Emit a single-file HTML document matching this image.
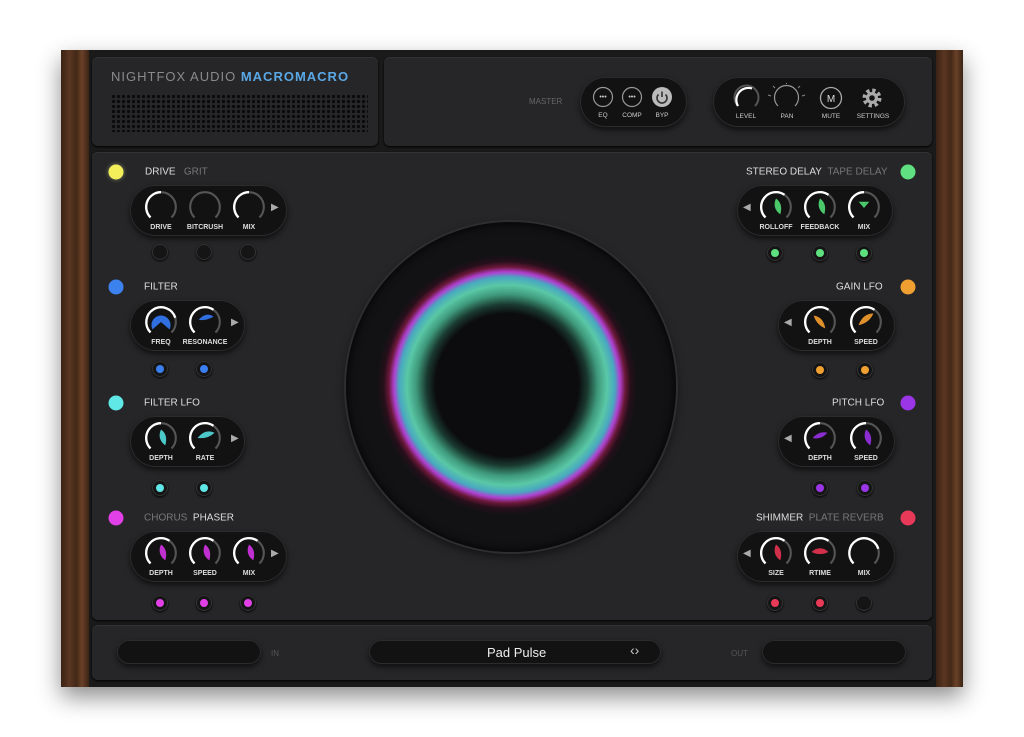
<!DOCTYPE html>
<html><head><meta charset="utf-8"><style>
*{margin:0;padding:0;box-sizing:border-box}
body{width:1024px;height:737px;background:#fff;position:relative;overflow:hidden;font-family:"Liberation Sans",sans-serif}
.a{position:absolute}
.wood{background:linear-gradient(90deg,#3a2214,#5a3622 30%,#432817 55%,#6a4128 75%,#3b2315)}
.panel{position:absolute;background:#262628;border-radius:6px;box-shadow:inset 0 1px 0 #333,0 1px 2px #000}
.pill{position:absolute;background:#121213;border-radius:26px;box-shadow:0 3px 6px rgba(0,0,0,.6),inset 0 0 0 1px #2c2c2e}
.k{position:absolute;width:36px;height:36px}
.lb{position:absolute;font-size:7px;font-weight:bold;color:#ddd;transform:translateX(-50%);white-space:nowrap}
.led{position:absolute;width:16px;height:16px;border-radius:50%;background:#151516;box-shadow:0 1px 2px #000,inset 0 0 0 1px #333;transform:translate(-50%,-50%)}
.led i{position:absolute;left:4px;top:4px;width:8px;height:8px;border-radius:50%}
.dot{position:absolute;width:15px;height:15px;border-radius:50%;transform:translate(-50%,-50%)}
.t{position:absolute;font-size:10px;color:#ddd;transform:translateY(-50%);white-space:nowrap}
.t span{color:#777}
.tri{position:absolute;font-size:10px;color:#aaa}
</style></head><body>
<div class="a" style="left:61px;top:50px;width:902px;height:637px;background:#1a1a1b;box-shadow:0 10px 22px rgba(0,0,0,.45)"></div>
<div class="a wood" style="left:61px;top:50px;width:28px;height:637px"></div>
<div class="a wood" style="left:936px;top:50px;width:27px;height:637px"></div>

<div class="panel" style="left:92px;top:57px;width:286px;height:89px"></div>
<div class="a" style="left:111px;top:69px;font-size:13px;letter-spacing:1px;color:#8a8a8c">NIGHTFOX AUDIO <b style="color:#5aa8e6">MACROMACRO</b></div>
<div class="a" style="left:111px;top:94px;width:257px;height:38px;background-image:radial-gradient(circle,#0a0a0b 1.5px,transparent 1.8px);background-size:5px 5px"></div>

<div class="panel" style="left:384px;top:57px;width:548px;height:89px"></div>
<div class="a" style="left:529px;top:97px;font-size:8px;color:#666">MASTER</div>
<div class="pill" style="left:580px;top:77px;width:107px;height:50px"></div>
<svg class="a" style="left:592px;top:86px" width="90" height="36">
<circle cx="11" cy="11" r="9.5" fill="none" stroke="#999" stroke-width="1.2"/><text x="11" y="13" font-size="7" fill="#ccc" text-anchor="middle">•••</text>
<circle cx="40" cy="11" r="9.5" fill="none" stroke="#999" stroke-width="1.2"/><text x="40" y="13" font-size="7" fill="#ccc" text-anchor="middle">•••</text>
<circle cx="70" cy="11" r="10" fill="#bbb"/><path d="M66.5 8.5A5 5 0 1 0 73.5 8.5" fill="none" stroke="#333" stroke-width="1.6"/><line x1="70" y1="5.5" x2="70" y2="11" stroke="#333" stroke-width="1.6"/>
<text x="11" y="31" font-size="6.5" fill="#ccc" text-anchor="middle">EQ</text><text x="40" y="31" font-size="6.5" fill="#ccc" text-anchor="middle">COMP</text><text x="70" y="31" font-size="6.5" fill="#ccc" text-anchor="middle">BYP</text></svg>
<div class="pill" style="left:713px;top:77px;width:192px;height:50px"></div>
<svg class="a" style="left:725px;top:83px" width="175" height="40">
<path d="M13 23A12 12 0 1 1 30 23" fill="none" stroke="#555" stroke-width="2"/><path d="M13 23A12 12 0 0 1 27 5.5" fill="none" stroke="#fff" stroke-width="2.2"/>
<path d="M53 23A12 12 0 1 1 70 23" fill="none" stroke="#999" stroke-width="1.2"/>
<g stroke="#888" stroke-width="1"><line x1="46" y1="13" x2="43" y2="12"/><line x1="50" y1="5" x2="48" y2="3"/><line x1="61.5" y1="1" x2="61.5" y2="-1"/><line x1="73" y1="5" x2="75" y2="3"/><line x1="77" y1="13" x2="80" y2="12"/></g>
<circle cx="106" cy="15" r="10.5" fill="none" stroke="#aaa" stroke-width="1.3"/><text x="106" y="19" font-size="10" fill="#ddd" text-anchor="middle">M</text>
<circle cx="147" cy="15" r="7" fill="none" stroke="#aaa" stroke-width="5" stroke-dasharray="3 2.5"/><circle cx="147" cy="15" r="6" fill="#aaa"/><circle cx="147" cy="15" r="2.8" fill="#121213"/>
<g font-size="6.5" fill="#ccc" text-anchor="middle"><text x="21" y="35">LEVEL</text><text x="62" y="35">PAN</text><text x="106" y="35">MUTE</text><text x="148" y="35">SETTINGS</text></g></svg>

<div class="panel" style="left:92px;top:152px;width:840px;height:468px"></div>
<div class="panel" style="left:92px;top:625px;width:840px;height:55px"></div>
<div class="pill" style="left:117px;top:640px;width:144px;height:24px;border-radius:12px;background:#121213"></div>
<div class="a" style="left:271px;top:649px;font-size:8px;color:#555">IN</div>
<div class="pill" style="left:369px;top:640px;width:292px;height:24px;border-radius:12px"></div>
<div class="a" style="left:487px;top:645px;font-size:13px;color:#eee">Pad Pulse</div>
<div class="a" style="left:630px;top:642px;font-size:14px;color:#ccc">&lsaquo;&rsaquo;</div>
<div class="a" style="left:731px;top:649px;font-size:8px;color:#555">OUT</div>
<div class="pill" style="left:762px;top:640px;width:144px;height:24px;border-radius:12px"></div>

<div class="a" style="left:346px;top:222px;width:330px;height:330px;border-radius:50%;background:#121214;box-shadow:0 0 0 2px #2e2e30,0 4px 10px rgba(0,0,0,.6),inset 0 0 10px #000"></div>
<div class="a" style="left:377px;top:255px;width:260px;height:260px;border-radius:50%;background:radial-gradient(circle closest-side,#0c0c0e 0,#0c0c0e 55%,#1a3a30 62%,#3f9a7c 70%,#5ac8a6 77%,#48a8c0 83%,#b040d0 87%,#6a1838 91%,rgba(60,12,32,.5) 95%,rgba(18,18,20,0) 100%)"></div>

<div class="dot" style="left:116px;top:172px;background:#f2ef5a;box-shadow:0 0 4px #886"></div>
<div class="t" style="left:145px;top:172px">DRIVE &nbsp; <span>GRIT</span></div>
<div class="dot" style="left:116px;top:287px;background:#3b82ee"></div>
<div class="t" style="left:144px;top:287px">FILTER</div>
<div class="dot" style="left:116px;top:403px;background:#5fe8e6"></div>
<div class="t" style="left:144px;top:403px">FILTER LFO</div>
<div class="dot" style="left:116px;top:518px;background:#e040e6"></div>
<div class="t" style="left:144px;top:518px"><span>CHORUS</span> &nbsp;PHASER</div>
<div class="dot" style="left:908px;top:172px;background:#60e080"></div>
<div class="t" style="left:746px;top:172px">STEREO DELAY &nbsp;<span>TAPE DELAY</span></div>
<div class="dot" style="left:908px;top:287px;background:#f0a030"></div>
<div class="t" style="left:836px;top:287px">GAIN LFO</div>
<div class="dot" style="left:908px;top:403px;background:#9a36e6"></div>
<div class="t" style="left:832px;top:403px">PITCH LFO</div>
<div class="dot" style="left:908px;top:518px;background:#e83a58"></div>
<div class="t" style="left:756px;top:518px">SHIMMER &nbsp;<span>PLATE REVERB</span></div>

<div class="pill" style="left:130px;top:185px;width:157px;height:51px"></div>
<div class="pill" style="left:130px;top:300px;width:115px;height:51px"></div>
<div class="pill" style="left:130px;top:416px;width:115px;height:51px"></div>
<div class="pill" style="left:130px;top:531px;width:157px;height:51px"></div>
<div class="pill" style="left:737px;top:185px;width:156px;height:51px"></div>
<div class="pill" style="left:778px;top:300px;width:117px;height:51px"></div>
<div class="pill" style="left:778px;top:416px;width:117px;height:51px"></div>
<div class="pill" style="left:737px;top:531px;width:158px;height:51px"></div>
<div class="tri" style="left:271px;top:202px">&#9654;</div>
<div class="tri" style="left:231px;top:317px">&#9654;</div>
<div class="tri" style="left:231px;top:433px">&#9654;</div>
<div class="tri" style="left:271px;top:548px">&#9654;</div>
<div class="tri" style="left:743px;top:202px">&#9664;</div>
<div class="tri" style="left:784px;top:317px">&#9664;</div>
<div class="tri" style="left:784px;top:433px">&#9664;</div>
<div class="tri" style="left:743px;top:548px">&#9664;</div>

<svg width="0" height="0" style="position:absolute"><defs>
<path id="g" d="M7.1 26.9A14 14 0 1 1 26.9 26.9" fill="none" stroke="#555" stroke-width="2"/>
<path id="w5" d="M7.1 26.9A14 14 0 0 1 17 3" fill="none" stroke="#fff" stroke-width="2.2"/>
<path id="w6" d="M7.1 26.9A14 14 0 0 1 25 5.5" fill="none" stroke="#fff" stroke-width="2.2"/>
<path id="w8" d="M7.1 26.9A14 14 0 1 1 30.5 13" fill="none" stroke="#fff" stroke-width="2.2"/>
<path id="lf" d="M17 9Q24 14 21 24Q13 18 17 9Z"/>
</defs></svg>

<svg class="k" style="left:143px;top:189px" viewBox="0 0 34 34"><use href="#g"/><use href="#w5"/></svg>
<svg class="k" style="left:187px;top:189px" viewBox="0 0 34 34"><use href="#g"/></svg>
<svg class="k" style="left:231px;top:189px" viewBox="0 0 34 34"><use href="#g"/><use href="#w5"/></svg>
<svg class="k" style="left:143px;top:304px" viewBox="0 0 34 34"><use href="#g"/><use href="#w8"/><path d="M9 24A9 9 0 1 1 25 24L17 17Z" fill="#2f6fe0"/></svg>
<svg class="k" style="left:187px;top:304px" viewBox="0 0 34 34"><use href="#g"/><use href="#w6"/><path d="M11 15Q18 7 25 12Q18 16 11 15Z" fill="#2f6fe0"/></svg>
<svg class="k" style="left:143px;top:420px" viewBox="0 0 34 34"><use href="#g"/><use href="#w5"/><use href="#lf" fill="#4cc8c8"/></svg>
<svg class="k" style="left:187px;top:420px" viewBox="0 0 34 34"><use href="#g"/><use href="#w6"/><path d="M10 17Q17 8 26 12Q20 18 10 17Z" fill="#4cc8c8"/></svg>
<svg class="k" style="left:143px;top:535px" viewBox="0 0 34 34"><use href="#g"/><use href="#w6"/><use href="#lf" fill="#c030d0"/></svg>
<svg class="k" style="left:187px;top:535px" viewBox="0 0 34 34"><use href="#g"/><use href="#w6"/><use href="#lf" fill="#c030d0"/></svg>
<svg class="k" style="left:231px;top:535px" viewBox="0 0 34 34"><use href="#g"/><use href="#w6"/><use href="#lf" fill="#c030d0"/></svg>
<svg class="k" style="left:758px;top:189px" viewBox="0 0 34 34"><use href="#g"/><use href="#w6"/><use href="#lf" fill="#4ac86a"/></svg>
<svg class="k" style="left:802px;top:189px" viewBox="0 0 34 34"><use href="#g"/><use href="#w6"/><use href="#lf" fill="#4ac86a"/></svg>
<svg class="k" style="left:846px;top:189px" viewBox="0 0 34 34"><use href="#g"/><use href="#w5"/><path d="M12 12L22 12L17 18Z" fill="#4ac86a"/></svg>
<svg class="k" style="left:802px;top:304px" viewBox="0 0 34 34"><use href="#g"/><use href="#w6"/><path d="M11 11Q20 12 22 23Q14 20 11 11Z" fill="#e0902a"/></svg>
<svg class="k" style="left:848px;top:304px" viewBox="0 0 34 34"><use href="#g"/><use href="#w6"/><path d="M10 20Q14 9 24 9Q20 18 10 20Z" fill="#e0902a"/></svg>
<svg class="k" style="left:802px;top:420px" viewBox="0 0 34 34"><use href="#g"/><use href="#w5"/><path d="M10 17Q16 10 24 12Q18 19 10 17Z" fill="#8a2cd0"/></svg>
<svg class="k" style="left:848px;top:420px" viewBox="0 0 34 34"><use href="#g"/><use href="#w5"/><use href="#lf" fill="#8a2cd0"/></svg>
<svg class="k" style="left:758px;top:535px" viewBox="0 0 34 34"><use href="#g"/><use href="#w6"/><use href="#lf" fill="#d0304a"/></svg>
<svg class="k" style="left:802px;top:535px" viewBox="0 0 34 34"><use href="#g"/><use href="#w6"/><path d="M9 16Q17 9 25 16Q17 20 9 16Z" fill="#d0304a"/></svg>
<svg class="k" style="left:846px;top:535px" viewBox="0 0 34 34"><use href="#g"/><use href="#w8"/></svg>

<div class="lb" style="left:161px;top:224px">DRIVE</div><div class="lb" style="left:205px;top:224px">BITCRUSH</div><div class="lb" style="left:249px;top:224px">MIX</div>
<div class="lb" style="left:161px;top:339px">FREQ</div><div class="lb" style="left:205px;top:339px">RESONANCE</div>
<div class="lb" style="left:161px;top:455px">DEPTH</div><div class="lb" style="left:205px;top:455px">RATE</div>
<div class="lb" style="left:161px;top:570px">DEPTH</div><div class="lb" style="left:205px;top:570px">SPEED</div><div class="lb" style="left:249px;top:570px">MIX</div>
<div class="lb" style="left:776px;top:224px">ROLLOFF</div><div class="lb" style="left:820px;top:224px">FEEDBACK</div><div class="lb" style="left:864px;top:224px">MIX</div>
<div class="lb" style="left:820px;top:339px">DEPTH</div><div class="lb" style="left:866px;top:339px">SPEED</div>
<div class="lb" style="left:820px;top:455px">DEPTH</div><div class="lb" style="left:866px;top:455px">SPEED</div>
<div class="lb" style="left:776px;top:570px">SIZE</div><div class="lb" style="left:820px;top:570px">RTIME</div><div class="lb" style="left:864px;top:570px">MIX</div>

<div class="led" style="left:160px;top:252px"></div><div class="led" style="left:204px;top:252px"></div><div class="led" style="left:248px;top:252px"></div>
<div class="led" style="left:160px;top:369px"><i style="background:#3a7ef0"></i></div><div class="led" style="left:204px;top:369px"><i style="background:#3a7ef0"></i></div>
<div class="led" style="left:160px;top:488px"><i style="background:#5fe6e6"></i></div><div class="led" style="left:204px;top:488px"><i style="background:#5fe6e6"></i></div>
<div class="led" style="left:160px;top:603px"><i style="background:#e040e6"></i></div><div class="led" style="left:204px;top:603px"><i style="background:#e040e6"></i></div><div class="led" style="left:248px;top:603px"><i style="background:#e040e6"></i></div>
<div class="led" style="left:775px;top:253px"><i style="background:#5ee07e"></i></div><div class="led" style="left:820px;top:253px"><i style="background:#5ee07e"></i></div><div class="led" style="left:864px;top:253px"><i style="background:#5ee07e"></i></div>
<div class="led" style="left:820px;top:370px"><i style="background:#f0a030"></i></div><div class="led" style="left:865px;top:370px"><i style="background:#f0a030"></i></div>
<div class="led" style="left:820px;top:488px"><i style="background:#9a36e6"></i></div><div class="led" style="left:865px;top:488px"><i style="background:#9a36e6"></i></div>
<div class="led" style="left:775px;top:603px"><i style="background:#e83a58"></i></div><div class="led" style="left:820px;top:603px"><i style="background:#e83a58"></i></div><div class="led" style="left:864px;top:603px"></div>
</body></html>
